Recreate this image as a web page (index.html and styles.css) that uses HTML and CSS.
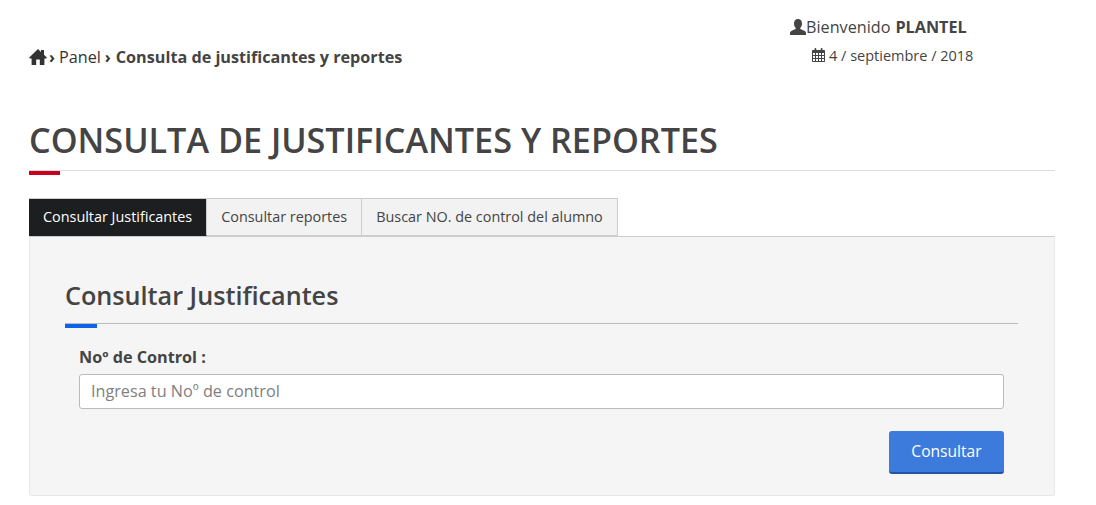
FILE: index.html

```html
<!DOCTYPE html>
<html lang="en">

<head>
    <meta charset="UTF-8">
    <meta name="viewport" content="width=device-width, initial-scale=1.0">
    <title>Consulta de justificantes y reportes</title>

    <link rel="stylesheet" href="styles.css">
</head>

<body>
    <div class="container">
        <div class="top-bar">
            <div class="breadcrumb">
                <svg class="icon-home" viewBox="0 0 18 16" width="18" height="16">
                    <path d="M9 0 L12 2.9 V1 H15 V5.8 L18 8.7 L17 9.4 H15.4 V16 H10.8 V10.5 H7.2 V16 H2.6 V9.4 H1 L0 8.7 Z" fill="#333"/>
                </svg>
                <span class="sep">&rsaquo;</span>
                <span class="crumb">Panel</span>
                <span class="sep">&rsaquo;</span>
                <strong>Consulta de justificantes y reportes</strong>
            </div>
            <div class="user-info">
                <div class="user-name">
                    <svg class="icon-user" viewBox="0 0 16 16" width="16" height="16">
                        <path d="M8 0 C10.6 0 12 1.9 12 4.4 C12 6.3 11.2 8 10.2 9 C10.2 10 11 10.4 12.5 11 C14.5 11.8 16 12.5 16 14 V16 H0 V14 C0 12.5 1.5 11.8 3.5 11 C5 10.4 5.8 10 5.8 9 C4.8 8 4 6.3 4 4.4 C4 1.9 5.4 0 8 0 Z" fill="#444"/>
                    </svg>Bienvenido <strong>PLANTEL</strong>
                </div>
                <div class="user-date">
                    <svg class="icon-calendar" viewBox="0 0 13 14" width="13" height="14">
                        <path fill-rule="evenodd" fill="#444" d="M0 3 C0 2.4 .4 2 1 2 H2.5 V1 C2.5 .4 2.9 0 3.4 0 C3.9 0 4.3 .4 4.3 1 V2 H8.7 V1 C8.7 .4 9.1 0 9.6 0 C10.1 0 10.5 .4 10.5 1 V2 H12 C12.6 2 13 2.4 13 3 V13 C13 13.6 12.6 14 12 14 H1 C.4 14 0 13.6 0 13 Z M1 5 V7 H3 V5 Z M4 5 V7 H6 V5 Z M7 5 V7 H9 V5 Z M10 5 V7 H12 V5 Z M1 8 V10 H3 V8 Z M4 8 V10 H6 V8 Z M7 8 V10 H9 V8 Z M10 8 V10 H12 V8 Z M1 11 V13 H3 V11 Z M4 11 V13 H6 V11 Z M7 11 V13 H9 V11 Z M10 11 V13 H12 V11 Z"/>
                    </svg>
                    4 / septiembre / 2018
                </div>
            </div>
        </div>

        <h1 class="page-title">CONSULTA DE JUSTIFICANTES Y REPORTES</h1>

        <div class="tabs">
            <a class="tab active">Consultar Justificantes</a>
            <a class="tab">Consultar reportes</a>
            <a class="tab">Buscar NO. de control del alumno</a>
        </div>

        <div class="panel">
            <h2 class="panel-title">Consultar Justificantes</h2>
            <form class="form">
                <label for="control">Noº de Control :</label>
                <input type="text" id="control" placeholder="Ingresa tu Noº de control">
                <div class="form-actions">
                    <button type="button" class="btn">Consultar</button>
                </div>
            </form>
        </div>
    </div>
</body>

</html>
```

FILE: styles.css

```css
* {
    margin: 0;
    padding: 0;
    box-sizing: border-box;
    font-family: 'Open Sans', 'Liberation Sans', sans-serif;
}
body {
    background-color: #fff;
    color: #444;
}
.container {
    width: 1026px;
    margin-left: 29px;
}
.top-bar {
    display: flex;
    justify-content: space-between;
    height: 120px;
    padding-top: 15px;
}
.breadcrumb {
    display: flex;
    align-items: center;
    gap: 2px;
    height: 20px;
    margin-top: 32px;
    font-size: 16.2px;
    color: #333;
}
.breadcrumb strong {
    font-weight: 700;
    color: #444;
    margin-left: 1px;
}
.crumb {
    margin-right: 2px;
}
.sep {
    font-weight: 700;
    margin-right: 2px;
}
.user-info {
    width: 265px;
    font-size: 14.5px;
}
.user-name {
    display: flex;
    align-items: center;
    height: 24px;
    font-size: 16.2px;
}
.user-name strong {
    margin-left: 5px;
}
.user-date {
    display: flex;
    align-items: center;
    gap: 4px;
    height: 20px;
    margin-top: 6px;
    padding-left: 22px;
}
.page-title {
    position: relative;
    height: 51px;
    padding-bottom: 8px;
    border-bottom: 1px solid #ddd;
    font-size: 34.2px;
    line-height: 40px;
    font-weight: 600;
    color: #444;
}
.page-title::after {
    content: "";
    position: absolute;
    left: 0;
    bottom: -5px;
    width: 31px;
    height: 4px;
    background-color: #c9001d;
}
.tabs {
    display: flex;
    margin-top: 27px;
}
.tab {
    height: 38px;
    padding: 0 14px;
    line-height: 36px;
    font-size: 14.4px;
    color: #444;
    background-color: #f2f2f2;
    border: 1px solid #ccc;
    border-left: none;
}
.tab.active {
    color: #fff;
    background-color: #1d1e20;
    border-bottom-color: #1d1e20;
}
.panel {
    height: 260px;
    padding: 42px 36px 0 35px;
    background-color: #f5f5f5;
    border: 1px solid #e8e8e8;
    border-top: 1px solid #ccc;
    border-radius: 0 0 3px 3px;
}
.panel-title {
    position: relative;
    height: 45px;
    border-bottom: 1px solid #bbb;
    font-size: 25.2px;
    line-height: 33px;
    font-weight: 600;
    color: #444;
}
.panel-title::after {
    content: "";
    position: absolute;
    left: 0;
    bottom: -5px;
    width: 32px;
    height: 4px;
    background-color: #0d62e8;
}
.form {
    padding: 23px 14px 0;
}
.form label {
    display: block;
    height: 27px;
    font-size: 16.2px;
    line-height: 20px;
    font-weight: 700;
}
.form input {
    display: block;
    width: 100%;
    height: 35px;
    padding: 0 11px 2px;
    font-size: 16.2px;
    background-color: #fff;
    border: 1px solid #bbb;
    border-radius: 3px;
    outline: none;
}
.form input::placeholder {
    color: #808080;
    opacity: 1;
}
.form-actions {
    display: flex;
    justify-content: flex-end;
    margin-top: 22px;
}
.btn {
    width: 115px;
    height: 43px;
    padding-bottom: 1px;
    font-size: 15.6px;
    color: #fff;
    background-color: #3c7bdc;
    border: none;
    border-bottom: 2px solid #22559f;
    border-radius: 3px;
}
```
